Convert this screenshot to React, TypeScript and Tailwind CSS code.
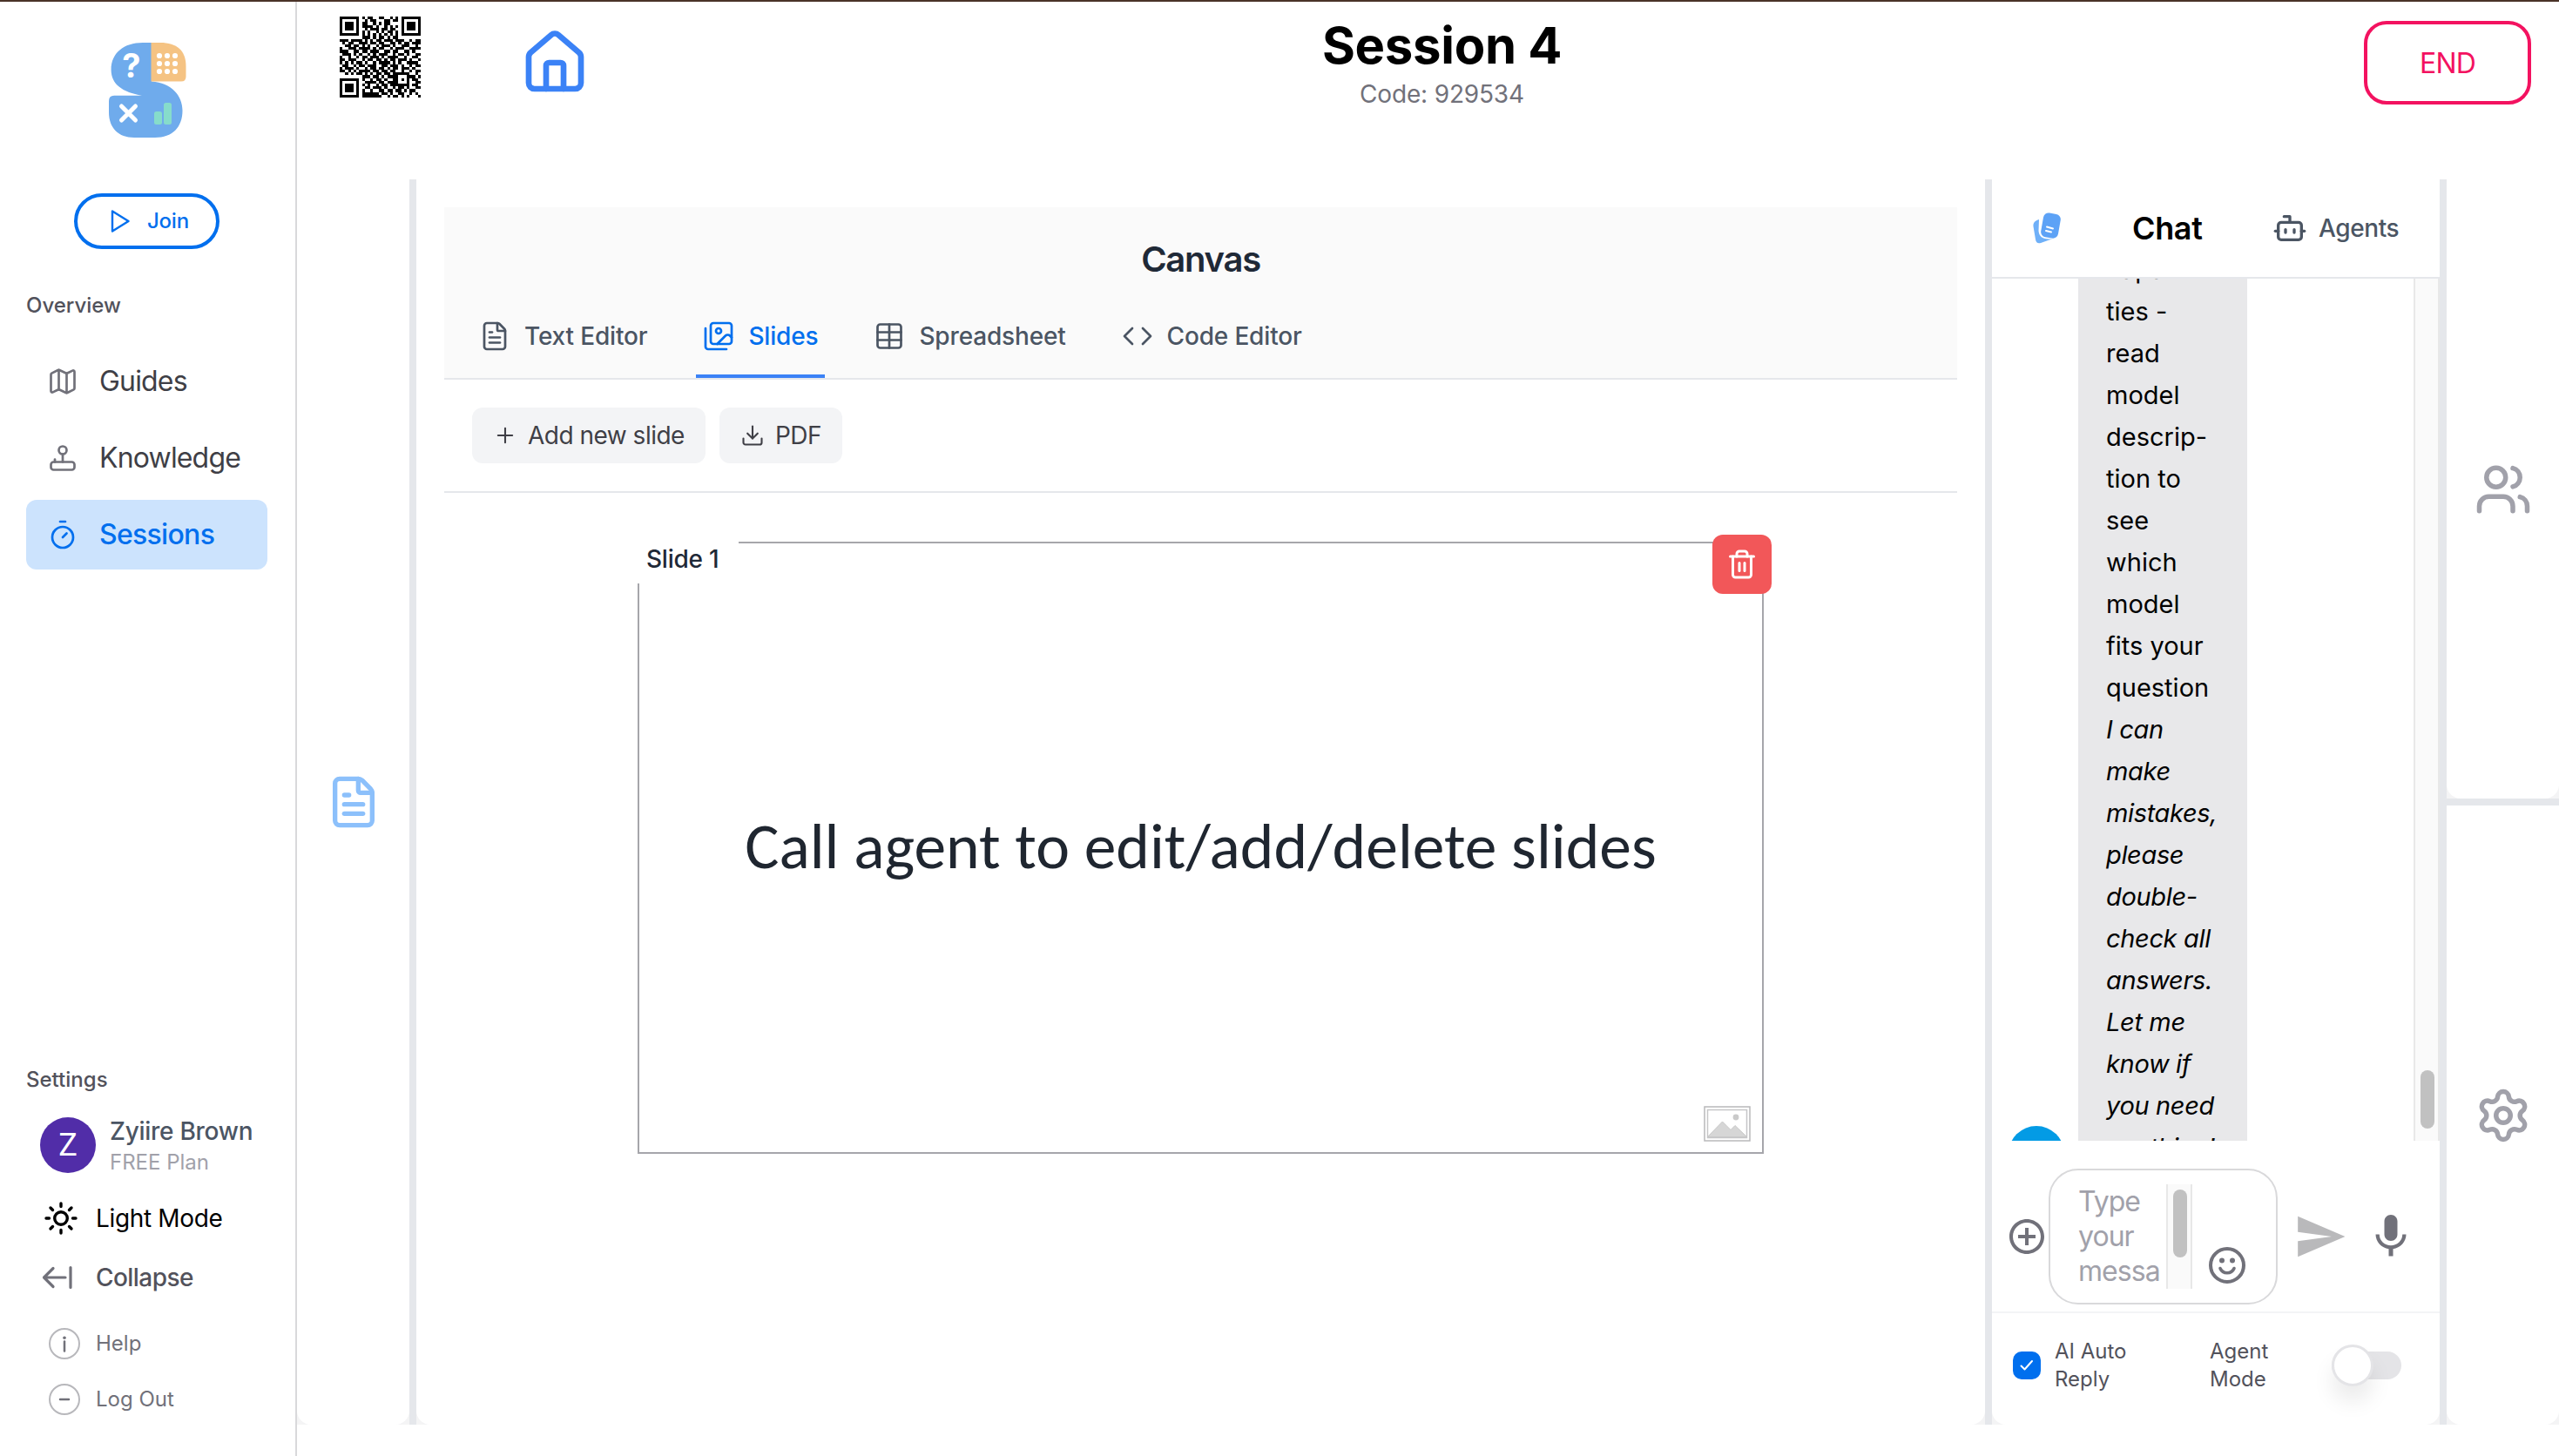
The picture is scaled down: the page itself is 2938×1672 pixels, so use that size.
import type { ReactNode } from "react";
import {
  Bot,
  Code,
  Download,
  FileText,
  House,
  Joystick,
  Map,
  Plus,
  Settings,
  Table,
  Timer,
  Trash2,
  Users,
} from "lucide-react";
import { MdAddCircleOutline, MdMic, MdSend } from "react-icons/md";

const QR_ROWS = [
  "11111110101100110010101111111",
  "10000010010110001101101000001",
  "10111010110010101100001011101",
  "10111010111101001010101011101",
  "10111010010111011011001011101",
  "10000010101001010110101000001",
  "11111110101010101010101111111",
  "00000000111010110101100000000",
  "11101111010101101110111001011",
  "01011001110110110011010110111",
  "00110110101001011101001110010",
  "10011101111010110010111001111",
  "11100110110111001101100110100",
  "01110101001010111001011010011",
  "10010010110111010111100100110",
  "11011100101101101011011101001",
  "10101011010010111101010011110",
  "01100101101110011011101001011",
  "10111010010110110101101110100",
  "11010101111011011011001001011",
  "00101011010101101101111110010",
  "00000000111011010111100011101",
  "11111110100101101001101010110",
  "10000010011110110111100010011",
  "10111010101001011011111110110",
  "10111010011011101001011010011",
  "10111010100100110110110101100",
  "10000010111111011010011001010",
  "11111110111111100101101010001",
];

function SlidesIcon({ size, strokeWidth }: { size: number; strokeWidth: number }) {
  return (
    <svg
      width={size}
      height={size}
      viewBox="0 0 24 24"
      fill="none"
      stroke="currentColor"
      strokeWidth={strokeWidth}
      strokeLinecap="round"
      strokeLinejoin="round"
    >
      <path d="M18 22H4a2 2 0 0 1-2-2V6" />
      <path d="m22 13-1.296-1.296a2.41 2.41 0 0 0-3.408 0L11 18" />
      <circle cx="12" cy="8" r="2" />
      <rect width="16" height="16" x="6" y="2" rx="2" />
    </svg>
  );
}

const TABS = [
  { label: "Text Editor", icon: FileText, active: false },
  { label: "Slides", icon: SlidesIcon, active: true },
  { label: "Spreadsheet", icon: Table, active: false },
  { label: "Code Editor", icon: Code, active: false },
];

const MESSAGE = ["capabili-", "ties -", "read", "model", "descrip-", "tion to", "see", "which", "model", "fits your", "question"];

const DISCLAIMER = ["I can", "make", "mistakes,", "please", "double-", "check all", "answers.", "Let me", "know if", "you need", "anything!"];

function Logo() {
  return (
    <svg width="90" height="110" viewBox="125 49 90 110">
      <path
        d="M174 49H164C142 49 127.600 61 127.600 80C127.600 97 141 106 163 109.700H131Q125 109.700 125 116V129C125 147 136 158 154 158H178C198 158 209.500 146 209.500 127C209.500 110 197 95 174 93.500Z"
        fill="#6fabec"
      />
      <path d="M173.500 49H184C203 49 213.500 58 213.500 76V88Q213.500 93.500 208 93.500H173.500Z" fill="#f5c383" />
      {[64, 73, 82].map((cy) =>
        [183, 192, 201].map((cx) => <circle key={cx + "-" + cy} cx={cx} cy={cy} r="3.100" fill="#fff" />)
      )}
      <text x="151" y="89" textAnchor="middle" fontSize="38" fontWeight="700" fontFamily="Inter, sans-serif" fill="#fff">
        ?
      </text>
      <path d="M139.500 122L155.500 138M155.500 122L139.500 138" stroke="#fff" strokeWidth="5" strokeLinecap="round" />
      <rect x="177" y="128" width="9" height="15" rx="2.500" fill="#86dccb" />
      <rect x="188" y="118" width="9" height="25" rx="2.500" fill="#86dccb" />
    </svg>
  );
}

function QrCode() {
  return (
    <svg width="93" height="93" viewBox="0 0 29 29" shapeRendering="crispEdges">
      {QR_ROWS.map((row, y) =>
        row.split("").map((cell, x) => (cell === "1" ? <rect key={x + "-" + y} x={x} y={y} width="1" height="1" /> : null))
      )}
    </svg>
  );
}

function NavItem({ icon, label, active }: { icon: ReactNode; label: string; active?: boolean }) {
  return (
    <div
      className={
        active
          ? "flex h-20 items-center gap-6 rounded-xl bg-[#cce3fd] pl-6 text-[32px] font-medium tracking-[-0.022em] text-[#006fee]"
          : "flex h-20 items-center gap-6 rounded-xl pl-6 text-[32px] tracking-[-0.026em] text-[#3f3f46]"
      }
    >
      <span className={active ? "" : "text-[#71717a]"}>{icon}</span>
      {label}
    </div>
  );
}

function Sidebar() {
  return (
    <aside className="flex w-[341px] shrink-0 flex-col border-r-2 border-[#d9d9db] pr-8 pl-[30px]">
      <div className="mt-[47px] ml-[95px]">
        <Logo />
      </div>
      <div className="mt-[63px] ml-[55px] flex h-16 w-[167px] items-center gap-[18px] rounded-full border-4 border-[#006fee] pl-[34px] text-2xl font-medium tracking-[-0.01em] text-[#006fee]">
        <svg width="28" height="28" viewBox="0 0 28 28" fill="none" stroke="currentColor" strokeWidth="2.400" strokeLinejoin="round">
          <path d="M6 2.500V25.500L24.500 14Z" />
        </svg>
        Join
      </div>

      <p className="mt-[49px] text-2xl leading-8 font-medium text-[#52525b]">Overview</p>
      <nav className="mt-[31px] flex flex-col gap-2">
        <NavItem icon={<Map size={36} strokeWidth={1.8} />} label="Guides" />
        <NavItem icon={<Joystick size={36} strokeWidth={1.8} />} label="Knowledge" />
        <NavItem icon={<Timer size={36} strokeWidth={1.8} />} label="Sessions" active />
      </nav>

      <p className="mt-[570px] text-2xl leading-8 font-medium text-[#52525b]">Settings</p>
      <div className="mt-[27px] ml-4 flex gap-4">
        <div className="flex size-16 items-center justify-center rounded-full bg-[#512da8] font-['Roboto',sans-serif] text-4xl text-white">
          Z
        </div>
        <div className="whitespace-nowrap">
          <p className="text-[28px] leading-8 font-medium tracking-[-0.01em] text-[#4b5563]">Zyiire Brown</p>
          <p className="mt-1 text-2xl leading-8 text-[#a1a1aa]">FREE Plan</p>
        </div>
      </div>
      <div className="mt-[28px] ml-5 flex h-10 items-center gap-5 text-[28px] tracking-[-0.012em] text-black">
        <svg width="40" height="40" viewBox="0 0 40 40" fill="none" stroke="currentColor" strokeWidth="3.400" strokeLinecap="round">
          <circle cx="20" cy="20" r="7.300" />
          <path d="M20 3v3.500M20 33.500V37M3 20h3.500M33.500 20H37M8 8l2.500 2.500M29.500 29.500L32 32M8 32l2.500-2.500M29.500 10.500L32 8" />
        </svg>
        Light Mode
      </div>
      <div className="mt-[28px] ml-[18px] flex h-10 items-center gap-6 text-[28px] font-medium tracking-[-0.02em] text-[#52525b]">
        <svg width="38" height="38" viewBox="0 0 38 38" fill="none" stroke="#71717a" strokeWidth="3.200" strokeLinecap="round" strokeLinejoin="round">
          <path d="M13 8.500L2.500 19L13 29.500M3 19H27M33 7.500V30.500" />
        </svg>
        Collapse
      </div>
      <div className="mt-9 ml-[26px] flex h-10 items-center gap-[18px] text-2xl text-[#71717a]">
        <svg width="36" height="36" viewBox="0 0 36 36" fill="none">
          <circle cx="18" cy="18" r="17" stroke="#b8b8bc" strokeWidth="2" />
          <path d="M18 15.500V26.500" stroke="#71717a" strokeWidth="2.500" strokeLinecap="round" />
          <circle cx="18" cy="11.300" r="1.800" fill="#71717a" />
        </svg>
        Help
      </div>
      <div className="mt-6 ml-[26px] flex h-10 items-center gap-[18px] text-2xl text-[#71717a]">
        <svg width="36" height="36" viewBox="0 0 36 36" fill="none">
          <circle cx="18" cy="18" r="17" stroke="#b8b8bc" strokeWidth="2" />
          <path d="M13 18H23" stroke="#71717a" strokeWidth="2.500" strokeLinecap="round" />
        </svg>
        Log Out
      </div>
    </aside>
  );
}

function Header() {
  return (
    <header className="flex h-[204px] items-start justify-between pr-8 pl-[49px]">
      <div className="flex w-[320px] gap-[114px] pt-[17px]">
        <QrCode />
        <House size={80} strokeWidth={2} className="mt-[13px] shrink-0 text-[#3b82f6]" />
      </div>
      <div className="ml-[15px] flex w-[500px] flex-col items-center pt-[14px]">
        <h1 className="text-[58px] leading-[72px] font-bold tracking-[-0.005em] text-black">Session 4</h1>
        <p className="pt-0.5 text-[28px] leading-9 tracking-[-0.006em] text-[#71717a]">Code: 929534</p>
      </div>
      <div className="flex w-[320px] justify-end pt-[22px]">
        <button className="h-24 w-48 rounded-[26px] border-4 border-[#f31260] pt-0.5 text-[32px] tracking-[-0.025em] text-[#f31260]">
          END
        </button>
      </div>
    </header>
  );
}

function Slide() {
  return (
    <div className="relative ml-[222px] mt-14 flex h-[703px] w-[1293px] items-center justify-center border-2 border-[#a6a6ab]">
      <p className="pb-0.5 font-['Carlito','Lato',sans-serif] text-[73.6px] whitespace-nowrap text-[#1f2630]">
        Call agent to edit/add/delete slides
      </p>
      <span className="absolute -top-0.5 -left-0.5 h-12 w-[116px] bg-white pt-[2px] pl-2.5 text-[28px] leading-9 font-medium tracking-[-0.008em] text-[#1f2937]">
        Slide 1
      </span>
      <button className="absolute -top-[10px] -right-[11px] flex size-[68px] items-center justify-center rounded-xl bg-[#f25759] text-white">
        <Trash2 size={36} strokeWidth={2} />
      </button>
      <svg className="absolute right-[13px] bottom-[12px]" width="54" height="41" viewBox="0 0 54 41" fill="none">
        <rect x="1" y="1" width="52" height="39" stroke="#b9b9bb" strokeWidth="1.500" />
        <rect x="4.500" y="4.500" width="45" height="32" stroke="#c6c6c8" strokeWidth="1.500" />
        <path d="M4.500 35.500L21.500 18L31 27.500L36 22.500L49.500 35.500Z" fill="#d6d6d6" stroke="#c8c8c8" />
        <circle cx="37" cy="13" r="3.400" fill="#cacaca" />
      </svg>
    </div>
  );
}

function Canvas() {
  return (
    <section className="w-[1801px] shrink-0 bg-[#f4f4f5]">
      <div className="h-full rounded-b-2xl bg-white px-8 pt-8">
        <div className="flex h-[198px] flex-col border-b-2 border-gray-200 bg-[#fafafa]">
          <h2 className="pt-[34px] text-center text-[40px] leading-[52px] font-semibold tracking-[-0.032em] text-[#1f2937]">Canvas</h2>
          <div className="mt-auto flex gap-12 px-8">
            {TABS.map(({ label, icon: Icon, active }) => (
              <div
                key={label}
                className={
                  active
                    ? "flex h-24 items-center gap-4 border-b-4 border-[#3b82f6] px-2 pt-[3px] text-[28px] font-medium tracking-[-0.006em] text-[#006fee]"
                    : "flex h-24 items-center gap-4 border-b-4 border-transparent px-2 pt-[3px] text-[28px] font-medium tracking-[-0.006em] text-[#4b5563]"
                }
              >
                <Icon size={36} strokeWidth={1.8} />
                {label}
              </div>
            ))}
          </div>
        </div>

        <div className="flex h-[130px] items-center gap-4 border-b-2 border-gray-200 px-8">
          <button className="flex h-16 items-center gap-3 rounded-xl bg-[#f3f4f6] px-6 text-[28px] tracking-[-0.018em] text-[#3f3f46]">
            <Plus size={28} strokeWidth={1.8} />
            Add new slide
          </button>
          <button className="flex h-16 items-center gap-3 rounded-xl bg-[#f3f4f6] px-6 text-[28px] tracking-[-0.02em] text-[#3f3f46]">
            <Download size={28} strokeWidth={1.8} />
            PDF
          </button>
        </div>

        <Slide />
      </div>
    </section>
  );
}

function Chat() {
  return (
    <section className="w-[514px] shrink-0 bg-[#f4f4f5]">
      <div className="flex h-full flex-col rounded-b-2xl bg-white">
        {/* Panel header */}
        <div className="flex h-[114px] items-center border-b-2 border-gray-200 pl-[46px]">
          <svg width="36" height="38" viewBox="0 0 36 38">
            <path d="M8 9C3 10.500 1 13 1.500 17L4 32Q5 37.500 10 36L24 31C13 33 8 29 7.500 22Z" fill="#6fb0f8" />
            <rect x="11.500" y="2" width="20" height="28" rx="6" transform="rotate(10 21 16)" fill="#5da2f6" />
            <path d="M17 17.500L24 19.500M16 22L22 23.500" stroke="#fff" strokeWidth="2" strokeLinecap="round" />
          </svg>
          <h2 className="ml-[79px] w-[80px] text-4xl font-semibold tracking-[-0.01em] text-black">Chat</h2>
          <div className="ml-[81px] flex items-center gap-[13px] text-[28px] font-medium tracking-[-0.014em] text-[#4b5563]">
            <Bot size={40} strokeWidth={2} />
            Agents
          </div>
        </div>

        {/* Message list */}
        <div className="flex h-[990px] shrink-0 overflow-hidden">
          <div className="flex w-[99px] flex-col pt-[973px] pl-[19px]">
            <div className="size-16 shrink-0 rounded-full bg-[#039be5]" />
          </div>
          <div className="h-[1100px] w-[194px] bg-[#e8e8ea] pl-8 text-[29px] leading-12 whitespace-nowrap text-black">
            <div className="-mt-[34px]">
              {MESSAGE.map((line, i) => (
                <p key={i}>{line}</p>
              ))}
              {DISCLAIMER.map((line, i) => (
                <p key={i} className="tracking-[-0.012em] italic">
                  {line}
                </p>
              ))}
            </div>
          </div>
          <div className="ml-auto flex w-[30px] flex-col border-x-2 border-[#e8e8e8] bg-[#fafafa] pt-[909px] pl-1.5">
            <div className="h-[67px] w-4 rounded-full bg-[#c1c1c1]" />
          </div>
        </div>

        {/* Composer */}
        <div className="flex h-[198px] shrink-0 items-center border-b-2 border-[#f3f4f6] pt-6 pl-4">
          <MdAddCircleOutline size={48} className="shrink-0 text-[#71717a]" />
          <div className="ml-[1px] flex h-[156px] w-[263px] shrink-0 rounded-[34px] border-2 border-[#d9d9db] py-4 pl-8">
            <p className="w-[101px] text-[32px] leading-10 tracking-[-0.03em] text-[#a1a1aa]">
              Type
              <br />
              your
              <br />
              messa
            </p>
            <div className="flex h-[120px] w-[30px] flex-col border-x-2 border-[#e8e8e8] bg-[#fafafa] px-1.5 pt-1.5">
              <div className="h-[78px] w-4 rounded-full bg-[#c1c1c1]" />
            </div>
            <svg className="mt-[71px] ml-[18px]" width="44" height="44" viewBox="0 0 44 44" fill="none">
              <circle cx="22" cy="22" r="19" stroke="#71717a" strokeWidth="4" />
              <circle cx="16" cy="16.500" r="3" fill="#71717a" />
              <circle cx="28" cy="16.500" r="3" fill="#71717a" />
              <path d="M14 25.500C17 32.500 27 32.500 30 25.500" stroke="#71717a" strokeWidth="3.600" strokeLinecap="round" />
            </svg>
          </div>
          <MdSend size={62} className="ml-[18px] shrink-0 text-[#b9b9bb]" />
          <MdMic size={60} className="ml-5 shrink-0 text-[#71717a]" />
        </div>

        {/* Reply options */}
        <div className="flex h-[120px] items-center pl-6 text-2xl leading-8 text-[#52525b]">
          <div className="flex size-8 items-center justify-center rounded-[10px] bg-[#006fee]">
            <svg width="16" height="14" viewBox="0 0 16 14" fill="none" stroke="#fff" strokeWidth="2" strokeLinecap="round" strokeLinejoin="round">
              <path d="M1.500 7.500L5.500 11.500L14 2" />
            </svg>
          </div>
          <p className="ml-4 w-[178px]">
            AI Auto
            <br />
            Reply
          </p>
          <p className="w-[140px]">
            Agent
            <br />
            Mode
          </p>
          <div className="flex h-8 w-20 items-center rounded-full bg-[#e4e4e7]">
            <div className="size-12 shrink-0 rounded-full border-[3px] border-[#e4e4e7] bg-white shadow-[0_18px_24px_rgba(0,0,0,0.08)]" />
          </div>
        </div>
      </div>
    </section>
  );
}

export default function App() {
  return (
    <div className="flex h-[1672px] w-full overflow-hidden border-t-2 border-[#4a3228] bg-white font-['Inter',sans-serif]">
      <Sidebar />
      <main className="flex-1">
        <Header />
        <div className="flex h-[1430px]">
          <div className="w-[129px] shrink-0 bg-[#f4f4f5]">
            <div className="flex h-full items-center justify-center rounded-b-2xl bg-white">
              <FileText size={64} strokeWidth={2} className="text-[#8cc0fb]" />
            </div>
          </div>
          <div className="w-2 shrink-0 bg-gray-200" />
          <Canvas />
          <div className="w-2 shrink-0 bg-gray-200" />
          <Chat />
          <div className="w-2 shrink-0 bg-gray-200" />
          <div className="flex w-[129px] flex-col">
            <div className="flex-1 bg-[#f4f4f5]">
              <div className="flex h-full items-center justify-center rounded-b-2xl bg-white">
                <Users size={66} strokeWidth={2} className="text-[#a1a1aa]" />
              </div>
            </div>
            <div className="h-2 bg-gray-200" />
            <div className="flex-1 bg-[#f4f4f5]">
              <div className="flex h-full items-center justify-center rounded-b-2xl bg-white">
                <Settings size={66} strokeWidth={2} className="text-[#a1a1aa]" />
              </div>
            </div>
          </div>
        </div>
      </main>
    </div>
  );
}
